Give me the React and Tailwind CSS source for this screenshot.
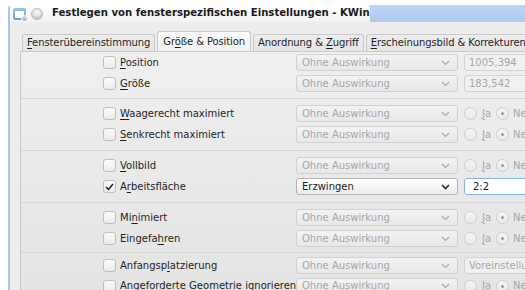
import React from "react";

const U = ({ children }) => (
  <span className="underline decoration-1 underline-offset-[2px]">{children}</span>
);

function Chevron({ dark }) {
  return (
    <svg width="9" height="6" viewBox="0 0 9 6" className="shrink-0">
      <path d="M1 1 L4.5 4.5 L8 1" fill="none" stroke={dark ? "#2a2a2a" : "#a8a8a8"} strokeWidth={dark ? 1.6 : 1.2} />
    </svg>
  );
}

function Combo({ value = "Ohne Auswirkung", enabled = false }) {
  return enabled ? (
    <div className="h-[17px] w-[162px] shrink-0 rounded-[3px] border border-[#b3b3b3] bg-gradient-to-b from-white to-[#ececec] flex items-center pl-[5px] pr-[7px] text-[#1b1b1b]">
      <span className="flex-1">{value}</span>
      <Chevron dark />
    </div>
  ) : (
    <div className="h-[17px] w-[162px] shrink-0 rounded-[3px] border border-[#d0d0d0] bg-gradient-to-b from-[#f3f3f3] to-[#e8e8e8] flex items-center pl-[5px] pr-[7px] text-[#a6a6a6]">
      <span className="flex-1">{value}</span>
      <Chevron />
    </div>
  );
}

function Field({ value, focused = false }) {
  return focused ? (
    <div className="h-[17px] w-[100px] shrink-0 rounded-[3px] border border-[#86b4e6] bg-white flex items-center pl-[8px] text-[#1b1b1b]">
      <span>{value}</span>
    </div>
  ) : (
    <div className="h-[17px] w-[100px] shrink-0 rounded-[3px] border border-[#d2d2d2] bg-[#f0f0f0] flex items-center pl-[4px] text-[#a6a6a6]">
      <span>{value}</span>
    </div>
  );
}

function Radio({ checked }) {
  return (
    <div className="w-[13px] h-[13px] rounded-full border border-[#cdcdcd] bg-gradient-to-b from-[#f6f6f6] to-[#e9e9e9] flex items-center justify-center shrink-0">
      {checked && <div className="w-[3px] h-[3px] rounded-full bg-[#9a9a9a]" />}
    </div>
  );
}

function Radios() {
  return (
    <div className="flex items-center text-[#a6a6a6] whitespace-nowrap">
      <Radio />
      <span className="ml-[5px]">
        <U>J</U>a
      </span>
      <div className="ml-[5px]">
        <Radio checked />
      </div>
      <span className="ml-[4px]">Nein</span>
    </div>
  );
}

function Check({ checked }) {
  return (
    <div className="w-[13px] h-[13px] rounded-[3px] border border-[#bdbdbd] bg-gradient-to-b from-[#fbfbfb] to-[#ebebeb] flex items-center justify-center shrink-0">
      {checked && (
        <svg width="9" height="8" viewBox="0 0 9 8">
          <path d="M1 4 L3.5 6.5 L8 1" fill="none" stroke="#1e1e1e" strokeWidth="1.5" />
        </svg>
      )}
    </div>
  );
}

function Row({ label, checked, combo, right, h = "h-[21px]" }) {
  return (
    <div className={`${h} flex items-center pl-[82px] overflow-hidden`}>
      <Check checked={checked} />
      <div className="w-[172px] shrink-0 ml-[4px] text-[#1e1e1e] whitespace-nowrap">
        <span>{label}</span>
      </div>
      <div className="ml-[4px] shrink-0">{combo || <Combo />}</div>
      <div className="ml-[6px] shrink-0">{right}</div>
    </div>
  );
}

function Sep({ h = "h-[9px]" }) {
  return (
    <div className={`${h} flex items-center`}>
      <div className="h-px w-full bg-[#d6d6d6]" />
    </div>
  );
}

export default function App() {
  return (
    <div
      className="w-[525px] h-[290px] overflow-hidden bg-white text-[10px] leading-none"
      style={{ fontFamily: '"DejaVu Sans", "Noto Sans", sans-serif' }}
    >
      <div className="ml-[8px] mt-[5px] h-[300px] border-l-2 border-[#a7c6ec] rounded-tl-[4px] bg-[#ededed] flex flex-col">
        {/* title bar */}
        <div className="h-[17px] flex shrink-0">
          <div className="w-[360px] shrink-0 overflow-hidden bg-gradient-to-b from-white to-[#f3f3f3] rounded-tr-[5px] flex items-center">
            <div className="ml-[3px] shrink-0 w-[13px] h-[12px] rounded-[2px] bg-gradient-to-b from-[#9ec0ea] to-[#6f9bd6] relative">
              <div className="absolute left-[2px] top-[3px] w-[9px] h-[7px] bg-white rounded-[1px]" />
              <div className="absolute right-[-2px] bottom-[-2px] w-[7px] h-[7px] rounded-full bg-gradient-to-b from-[#dcdcdc] to-[#a9a9a9] border border-white" />
            </div>
            <div className="ml-[5px] shrink-0 w-[12px] h-[12px] rounded-full bg-gradient-to-b from-[#f0f0f0] to-[#c4c4c4] border border-[#b8b8b8] flex items-center justify-center">
              <div className="w-[6px] h-[6px] rounded-full bg-gradient-to-b from-[#fafafa] to-[#e0e0e0]" />
            </div>
            <div className="ml-[9px] shrink-0 font-bold text-[10.15px] text-[#1a1a1a] whitespace-nowrap">
              Festlegen von fensterspezifischen Einstellungen - KWin
            </div>
          </div>
          <div className="flex-1 bg-gradient-to-b from-[#bcd5f3] to-[#adc9ee]" />
        </div>

        {/* body */}
        <div className="pl-[10px] pt-[8px] flex flex-col">
          {/* tabs */}
          <div className="h-[21px] flex items-end pl-[2px] text-[#1e1e1e] relative z-10 whitespace-nowrap tracking-[-0.1px]">
            <div className="h-[17px] px-[4px] border border-b-0 border-[#c9c9c9] rounded-t-[3px] bg-gradient-to-b from-[#eeeeee] to-[#e4e4e4] flex items-center mr-[2px]">
              <span><U>F</U>ensterübereinstimmung</span>
            </div>
            <div className="h-[20px] px-[5px] border border-b-0 border-[#c9c9c9] rounded-t-[3px] bg-gradient-to-b from-[#fbfbfb] to-[#f1f1f1] flex items-center mr-[2px]">
              <span>Gr<U>ö</U>ße &amp; Position</span>
            </div>
            <div className="h-[17px] px-[4px] border border-b-0 border-[#c9c9c9] rounded-t-[3px] bg-gradient-to-b from-[#eeeeee] to-[#e4e4e4] flex items-center mr-[2px]">
              <span>Anordnung &amp; <U>Z</U>ugriff</span>
            </div>
            <div className="h-[17px] px-[4px] border border-b-0 border-[#c9c9c9] rounded-t-[3px] bg-gradient-to-b from-[#eeeeee] to-[#e4e4e4] flex items-center">
              <span><U>E</U>rscheinungsbild &amp; Korrekturen</span>
            </div>
          </div>
          {/* frame */}
          <div className="border-l border-t border-[#c9c9c9] bg-gradient-to-b from-[#efefef] to-[#e4e4e4] flex flex-col">
            <Row label={<><U>P</U>osition</>} right={<Field value="1005,394" />} />
            <Row label={<><U>G</U>röße</>} right={<Field value="183,542" />} />
            <Sep h="h-[9px]" />
            <Row label={<><U>W</U>aagerecht maximiert</>} right={<Radios />} />
            <Row label={<><U>S</U>enkrecht maximiert</>} right={<Radios />} />
            <Sep h="h-[10px]" />
            <Row label={<><U>V</U>ollbild</>} right={<Radios />} />
            <Row
              label={<>A<U>r</U>beitsfläche</>}
              checked
              combo={<Combo value="Erzwingen" enabled />}
              right={<Field value="2:2" focused />}
            />
            <Sep h="h-[10px]" />
            <Row label={<>Mi<U>n</U>imiert</>} right={<Radios />} />
            <Row label={<>Eingefa<U>h</U>ren</>} right={<Radios />} />
            <Sep h="h-[6px]" />
            <Row label={<>Anfangsp<U>l</U>atzierung</>} right={<Field value="Voreinstellung" />} />
            <Row h="h-[20px]" label={<>Angeforderte Geometrie ignorieren</>} right={<Radios />} />
          </div>
        </div>
      </div>
    </div>
  );
}
